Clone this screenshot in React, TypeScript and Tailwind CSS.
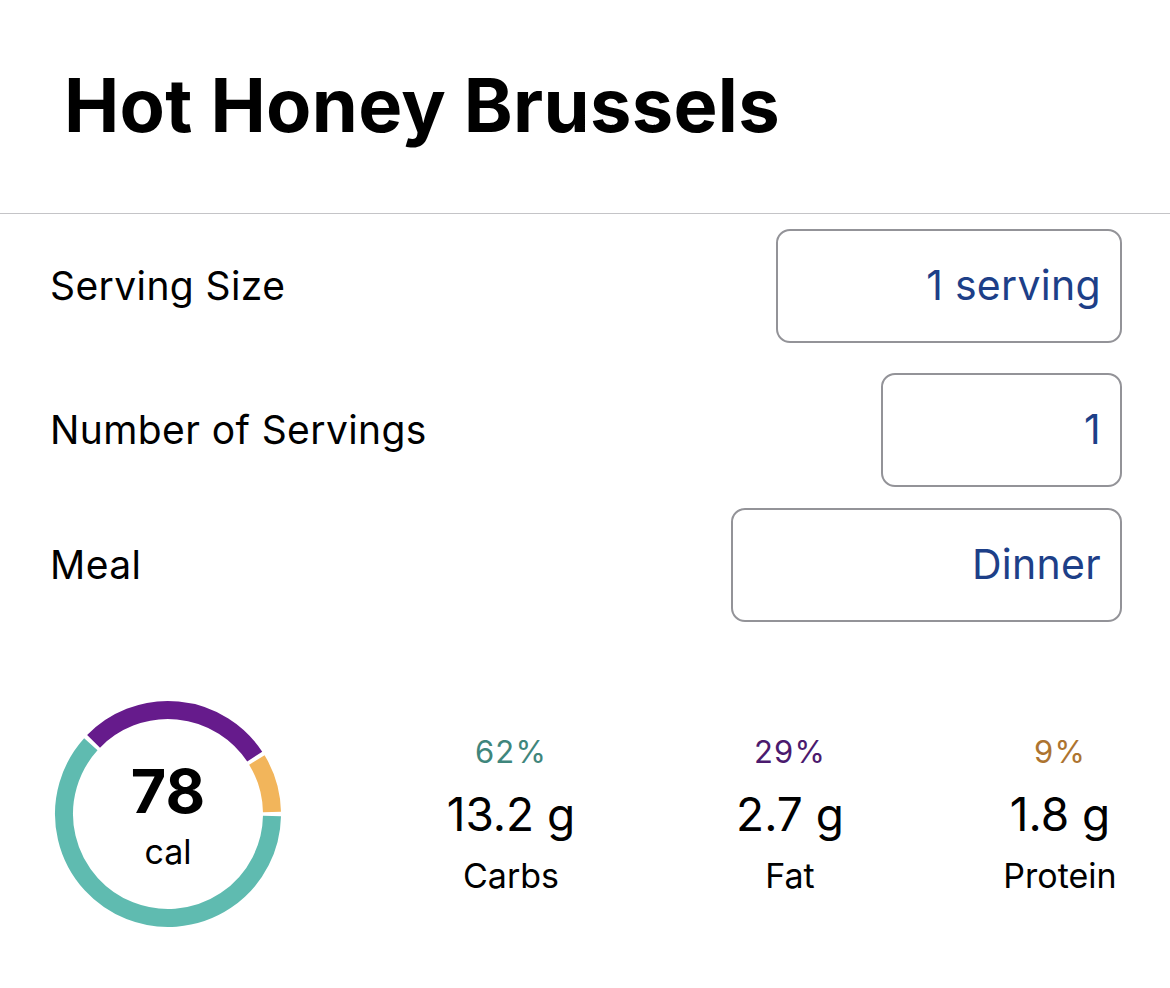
const font = { fontFamily: "Inter, 'Noto Sans', sans-serif" };

type Macro = { pct: string; grams: string; label: string; color: string };

const macros: Macro[] = [
  { pct: "62%", grams: "13.2 g", label: "Carbs", color: "text-[#3f867c]" },
  { pct: "29%", grams: "2.7 g", label: "Fat", color: "text-[#4b1a6e]" },
  { pct: "9%", grams: "1.8 g", label: "Protein", color: "text-[#ad7430]" },
];

function arc(cx: number, cy: number, r: number, a0: number, a1: number) {
  const rad = (a: number) => (a * Math.PI) / 180;
  const x0 = cx + r * Math.cos(rad(a0));
  const y0 = cy + r * Math.sin(rad(a0));
  const x1 = cx + r * Math.cos(rad(a1));
  const y1 = cy + r * Math.sin(rad(a1));
  const large = a1 - a0 > 180 ? 1 : 0;
  return `M ${x0} ${y0} A ${r} ${r} 0 ${large} 1 ${x1} ${y1}`;
}

function Donut() {
  const segs = [
    { from: 0, to: 223.2, color: "#5fbbb0" },
    { from: 223.2, to: 327.6, color: "#661b8c" },
    { from: 327.6, to: 360, color: "#f2b55b" },
  ];
  const gap = 1.1;
  return (
    <svg width="230" height="230" viewBox="0 0 230 230">
      {segs.map((s) => (
        <path
          key={s.color}
          d={arc(115, 115, 104, s.from + gap, s.to - gap)}
          fill="none"
          stroke={s.color}
          strokeWidth="18"
        />
      ))}
    </svg>
  );
}

function Field({ label, value, width, mt }: { label: string; value: string; width: string; mt: string }) {
  return (
    <div className={`flex items-center justify-between ${mt}`}>
      <span className="text-[39px] tracking-[0.4px] text-black">{label}</span>
      <div
        className={`${width} h-[114px] rounded-[14px] border-2 border-[#939398] flex items-center justify-end pr-[19px] text-[41px] tracking-[0.3px] text-[#1d3f88]`}
      >
        {value}
      </div>
    </div>
  );
}

export default function App() {
  return (
    <div className="w-[1170px] h-[988px] bg-white overflow-hidden" style={font}>
      <div className="h-[214px] border-b border-[#c4c4c7] pl-[64px] pt-[68px]">
        <h1 className="text-[74px] font-[750] leading-none tracking-[0.3px] text-black">Hot Honey Brussels</h1>
      </div>

      <div className="pl-[50px] pr-[48px]">
        <Field label="Serving Size" value="1 serving" width="w-[346px]" mt="mt-[15px]" />
        <Field label="Number of Servings" value="1" width="w-[241px]" mt="mt-[30px]" />
        <Field label="Meal" value="Dinner" width="w-[391px]" mt="mt-[21px]" />
      </div>

      <div className="flex items-center mt-[77px] pl-[53px]">
        <div className="relative w-[230px] h-[230px]">
          <Donut />
          <div className="absolute inset-0 flex flex-col items-center justify-center pt-[2px]">
            <span className="text-[61px] font-bold leading-none text-black">78</span>
            <span className="text-[34px] leading-none mt-[13px] text-black">cal</span>
          </div>
        </div>
        <div className="flex ml-[128px]">
          {macros.map((m, i) => (
            <div
              key={m.label}
              className={`flex flex-col items-center w-[200px] ${i === 1 ? "ml-[79px]" : i === 2 ? "ml-[70px]" : ""}`}
            >
              <span className={`text-[31px] leading-none tracking-[1.2px] ${m.color}`}>{m.pct}</span>
              <span className="text-[46px] leading-none mt-[24px] text-black">{m.grams}</span>
              <span className="text-[34px] leading-none mt-[22px] text-black">{m.label}</span>
            </div>
          ))}
        </div>
      </div>
    </div>
  );
}
